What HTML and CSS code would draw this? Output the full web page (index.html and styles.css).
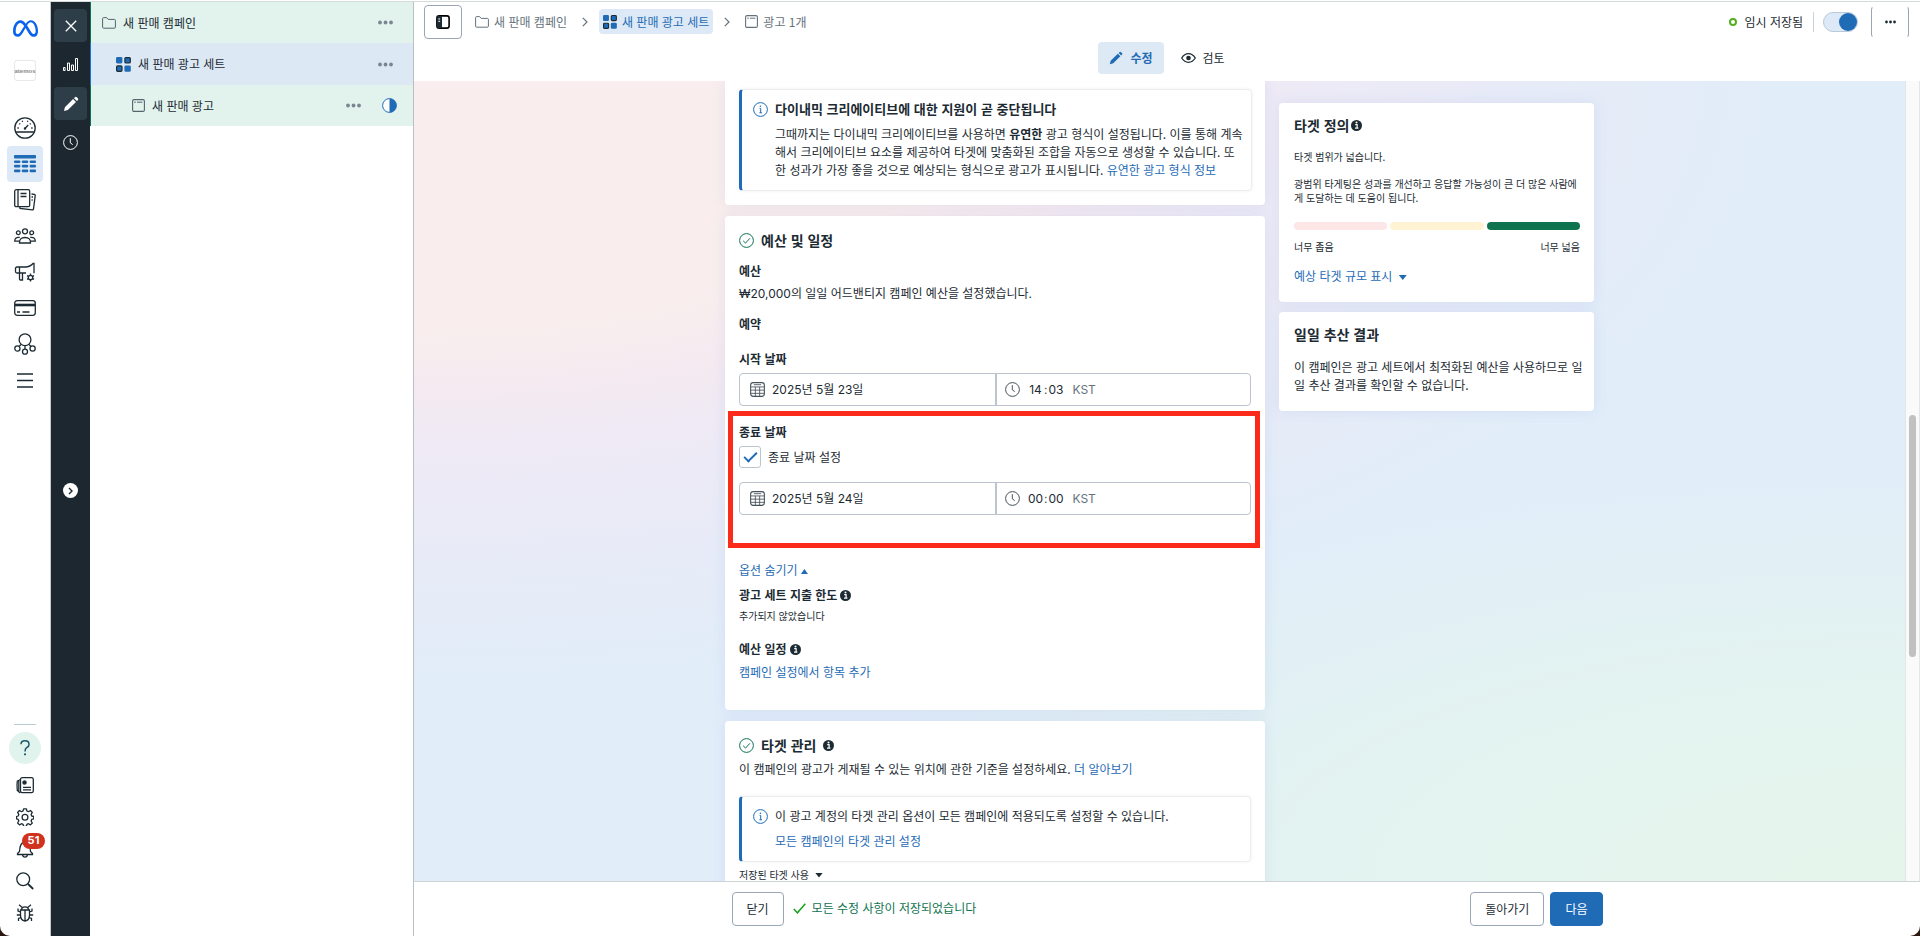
FILE: index.html
```html
<!DOCTYPE html>
<html lang="ko">
<head>
    <meta charset="UTF-8">
    <meta name="viewport" content="width=device-width, initial-scale=1.0">
    <title>광고 관리자</title>
    <link rel="stylesheet" href="styles.css">
</head>
<body>
    <svg class="sprite" aria-hidden="true">
        <symbol id="i-folder" viewBox="0 0 14 14"><path d="M.6 2.6q0-1 1-1h3l1.6 1.8h6.2q1 0 1 1v6.8q0 1-1 1H1.6q-1 0-1-1z" fill="none" stroke="currentColor"/></symbol>
        <symbol id="i-adset" viewBox="0 0 15 15"><rect x="0" y="0" width="6.4" height="6.4" rx="1.4" fill="#1f6bb5"/><rect x="8.9" y=".6" width="5.4" height="5.4" rx="1" fill="#1f6bb5" stroke="#1c2b33" stroke-width="1.2"/><rect x=".6" y="8.9" width="5.4" height="5.4" rx="1" fill="#1f6bb5" stroke="#1c2b33" stroke-width="1.2"/><rect x="8.4" y="8.4" width="6.4" height="6.4" rx="1.4" fill="#1f6bb5"/></symbol>
        <symbol id="i-ad" viewBox="0 0 13 13"><rect x=".6" y=".6" width="11.8" height="11.8" rx="1.4" fill="none" stroke="currentColor" stroke-width="1.1"/><path d="M2.2 3.2h1.6M5 3.2h5.4" stroke="currentColor"/></symbol>
        <symbol id="i-dots" viewBox="0 0 15 5"><circle cx="2" cy="2.5" r="1.9"/><circle cx="7.5" cy="2.5" r="1.9"/><circle cx="13" cy="2.5" r="1.9"/></symbol>
        <symbol id="i-pencil" viewBox="0 0 16 16"><path d="M1 15l.9-3.8 8.2-8.2 2.9 2.9-8.2 8.2zM11 2.2l.9-.9q1-.9 1.9 0l1 1q.9.9 0 1.9l-.9.9z"/></symbol>
        <symbol id="i-clock" viewBox="0 0 15 15"><circle cx="7.5" cy="7.5" r="6.9" fill="none" stroke="currentColor"/><path d="M7.3 3.2v4.6l2.4 1.8" fill="none" stroke="currentColor"/></symbol>
        <symbol id="i-info" viewBox="0 0 11 11"><circle cx="5.5" cy="5.5" r="5.5"/><path d="M4.2 4.6h1.9v3.2M4 8.1h3.4" stroke="#fff" stroke-width="1.2" fill="none"/><circle cx="5.5" cy="2.6" r="1" fill="#fff"/></symbol>
        <symbol id="i-info-o" viewBox="0 0 15 15"><circle cx="7.5" cy="7.5" r="6.9" fill="none" stroke="#1f6bb5"/><path d="M6.6 6.4h1.1v4.4M6.4 10.8h2.6" stroke="#1f6bb5" fill="none"/><circle cx="7.4" cy="4.2" r=".8" fill="#1f6bb5"/></symbol>
        <symbol id="i-ok" viewBox="0 0 15 15"><circle cx="7.5" cy="7.5" r="6.9" fill="none" stroke="#0f7350"/><path d="M4.2 7.8l2.3 2.3 4.4-4.8" fill="none" stroke="#0f7350"/></symbol>
        <symbol id="i-cal" viewBox="0 0 14 14"><path d="M3 .6h8Q13.4.6 13.4 3v8q0 2.400-2.400 2.400H3Q.6 13.400.6 11V3Q.6.6 3 .6z" fill="none" stroke="currentColor"/><path d="M.5 4.6h13M.5 7.6h13M.5 10.6h13M5 4.6v9M9 4.6v9M3.6 2.5h6.8" stroke="currentColor" stroke-width=".8"/></symbol>
        <symbol id="i-chev" viewBox="0 0 6 10"><path d="M.8.8L5 5 .8 9.2" fill="none" stroke="currentColor" stroke-width="1.2"/></symbol>
    </svg>

    <div class="app">
        <nav class="rail" aria-label="비즈니스 도구">
            <a href="#" class="brand" aria-label="Meta"><svg viewBox="0 4 24 16" width="25" height="17"><path fill="#0a63ee" d="M6.915 4.03c-1.968 0-3.683 1.28-4.871 3.113C.704 9.208 0 11.883 0 14.449c0 .706.07 1.369.21 1.973a6.624 6.624 0 0 0 .265.86 5.297 5.297 0 0 0 .371.761c.696 1.159 1.818 1.927 3.593 1.927 1.497 0 2.633-.671 3.965-2.444.76-1.012 1.144-1.626 2.663-4.32l.756-1.339.186-.325c.061.1.121.196.183.3l2.152 3.595c.724 1.21 1.665 2.556 2.47 3.314 1.046.987 1.992 1.22 3.06 1.22 1.075 0 1.876-.355 2.455-.843a3.743 3.743 0 0 0 .81-.973c.542-.939.861-2.127.861-3.745 0-2.72-.681-5.357-2.084-7.45-1.282-1.912-2.957-2.93-4.716-2.93-1.047 0-2.088.467-3.053 1.308-.652.57-1.257 1.29-1.82 2.05-.69-.875-1.335-1.547-1.958-2.056-1.182-.966-2.315-1.303-3.454-1.303zm10.16 2.053c1.147 0 2.188.758 2.992 1.999 1.132 1.748 1.647 4.195 1.647 6.4 0 1.548-.368 2.9-1.839 2.9-.58 0-1.027-.23-1.664-1.004-.496-.601-1.343-1.878-2.832-4.358l-.617-1.028a44.908 44.908 0 0 0-1.255-1.98c.07-.109.141-.224.211-.327 1.12-1.667 2.118-2.602 3.358-2.602zm-10.201.553c1.265 0 2.058.791 2.675 1.446.307.327.737.871 1.234 1.579l-1.02 1.566c-.757 1.163-1.882 3.017-2.837 4.338-1.191 1.649-1.81 1.817-2.486 1.817-.524 0-1.038-.237-1.383-.794-.263-.426-.464-1.13-.464-2.046 0-2.221.63-4.535 1.66-6.088.454-.687.964-1.226 1.533-1.533a2.264 2.264 0 0 1 1.088-.285z"/></svg></a>
            <a href="#" class="account">atemos</a>
            <div class="rail-list">
                <a href="#" class="rail-item" aria-label="계정 개요"><svg viewBox="0 0 22 22" width="22" height="22"><circle cx="11" cy="11" r="10.2"/><path d="M1.5 15h19M11 11.5l3.2-3.5M3.4 11h1.4M5.3 6.5l.9.8M8.2 3.8l.4 1.1M13.8 3.8l-.4 1.1M17.200 11h1.400M16.7 6.5l-.9.8"/><circle cx="11" cy="11.5" r=".6"/></svg></a>
                <a href="#" class="rail-item active" aria-label="캠페인"><svg viewBox="0 0 22 18" width="22" height="18"><g fill="#1f6bb5" stroke="none"><rect width="22" height="3.4" rx="1"/><rect y="5.4" width="6.4" height="2.6" rx="1"/><rect x="7.8" y="5.4" width="6.4" height="2.6" rx="1"/><rect x="15.6" y="5.4" width="6.4" height="2.6" rx="1"/><rect y="9.8" width="6.4" height="2.8" rx="1"/><rect x="7.8" y="9.8" width="6.4" height="2.8" rx="1"/><rect x="15.6" y="9.8" width="6.4" height="2.8" rx="1"/><rect y="14.4" width="6.4" height="2.8" rx="1"/><rect x="7.8" y="14.4" width="6.4" height="2.8" rx="1"/><rect x="15.6" y="14.4" width="6.4" height="2.8" rx="1"/></g></svg></a>
                <a href="#" class="rail-item" aria-label="광고 보고서"><svg viewBox="0 0 22 22" width="22" height="22"><rect x=".7" y=".7" width="15" height="17" rx="1.5"/><path d="M4 .7v17M6.5 4.5h6M6.5 7.5h6M17.5 5l2.8.4q1 .2.9 1.2l-1.7 13.4q-.2 1-1.2.9L6 19.4l-.2-1.6M17.5 8h1.5M17.5 11h1.2"/></svg></a>
                <a href="#" class="rail-item" aria-label="타겟"><svg viewBox="0 0 22 16" width="22" height="16"><circle cx="11" cy="3.3" r="2.5"/><circle cx="4.3" cy="4.7" r="1.9"/><circle cx="17.7" cy="4.7" r="1.9"/><path d="M5.5 15q-.3-5.5 5.5-5.5t5.5 5.5zM5.800 9.4q-5-.8-5.1 3.8h4.6M16.2 9.4q5-.8 5.1 3.8h-4.6"/></svg></a>
                <a href="#" class="rail-item" aria-label="광고 설정"><svg viewBox="0 0 22 20" width="22" height="20"><path d="M1.5 6.5q0-1.5 1.5-1.5h8.5q4.5 0 7.8-3.7h.7v10M1.5 6.5v3q0 1.5 1.5 1.5h9M5.5 5v6M5.5 11v6q0 1 1 1h2v-7"/><circle cx="16.5" cy="15.5" r="2.2"/><path d="M16.5 11.6v1.6M16.5 17.8v1.6M13 13.6l1.4.8M18.6 16.6l1.4.8M13 17.4l1.4-.8M18.6 14.4l1.4-.8"/></svg></a>
                <a href="#" class="rail-item" aria-label="청구"><svg viewBox="0 0 22 16" width="22" height="16"><rect x=".7" y=".7" width="20.6" height="14.6" rx="2.5"/><path d="M3 12h3M8.5 12h7"/><path d="M1 5h20" stroke-width="2.6"/></svg></a>
                <a href="#" class="rail-item" aria-label="이벤트 관리자"><svg viewBox="0 0 22 22" width="22" height="22"><circle cx="11" cy="6.7" r="5.9"/><circle cx="3.4" cy="15.5" r="2.6"/><circle cx="18.6" cy="15.5" r="2.6"/><circle cx="11" cy="18.7" r="2.5"/><path d="M7 11.5l-2 2M15 11.5l2 2M11 12.6v3.5"/></svg></a>
                <a href="#" class="rail-item" aria-label="모든 도구"><svg viewBox="0 0 16 15" width="16" height="15"><path d="M0 1h16M0 7.5h16M0 14h16"/></svg></a>
            </div>
            <div class="rail-list rail-bottom">
                <a href="#" class="help" aria-label="도움말"><svg viewBox="0 0 10 16" width="10" height="16"><path d="M1 4.2Q1 .8 5 .8t4 3.6q0 1.9-2 3Q5 8.6 5 11.4" fill="none" stroke="#1a5a68" stroke-width="1.5"/><circle cx="5" cy="14.3" r="1.1" fill="#1a5a68"/></svg></a>
                <a href="#" class="rail-tool" aria-label="소식"><svg viewBox="0 0 18 17" width="18" height="17"><rect x="4.5" y=".7" width="12.8" height="15" rx="1.8"/><path d="M4.5 2.5L1.3 4.2Q.7 8 1.3 13.5l3 2.5M2.8 4v10.5M7 10.3h8M7 12.8h8"/><circle cx="8.5" cy="5.5" r="1.6" fill="#1c2b33"/></svg></a>
                <a href="#" class="rail-tool" aria-label="설정"><svg viewBox="0 0 18 18" width="18" height="18"><path d="M7.6.8h2.800l.5 2.200 1.500.7 2-1.200 1.900 2-1.200 1.900.6 1.600 2.100.5v2.300l-2.100.6-.6 1.600 1.200 2-1.900 1.900-2-1.200-1.500.6-.5 2.100H7.600L7 16.300l-1.500-.6-2 1.200-1.900-1.900 1.200-2-.6-1.600-1.700-.6V8.500L2.200 8l.6-1.600-1.200-1.900 1.900-2 2 1.200L7 3z" stroke-linejoin="round"/><circle cx="9" cy="9.2" r="2.9"/></svg></a>
                <a href="#" class="rail-tool" aria-label="알림"><svg viewBox="0 0 18 18" width="18" height="18"><path d="M3.5 11.5Q4 2 9 2t5.5 9.5l2 2v1H1.500v-1zM6.5 14.5q.3 2.600 2.500 2.600t2.500-2.600"/></svg><span class="badge">51</span></a>
                <a href="#" class="rail-tool" aria-label="검색"><svg viewBox="0 0 18 18" width="18" height="18"><circle cx="7.2" cy="7.2" r="6.4"/><path d="M12 12l5.2 5" stroke-width="1.8"/></svg></a>
                <a href="#" class="rail-tool" aria-label="문제 신고"><svg viewBox="0 0 18 18" width="18" height="18"><path d="M4.5 6h9v5q0 5.500-4.500 6-4.500-.5-4.500-6zM5.500 6q0-3.200 3.500-3.200T12.500 6M9 6v11M3 .8l3 2.400M15 .8l-3 2.400M4.500 8L2 7V4.500M4.500 11H.8M5 13.500l-2.500 1v2.500M13.500 8L16 7V4.500M13.500 11h3.700M13 13.500l2.500 1v2.500"/></svg></a>
            </div>
        </nav>

        <div class="side">
            <button class="side-btn on" aria-label="닫기"><svg viewBox="0 0 12 12" width="12" height="12"><path d="M.8.8l10.4 10.4M11.2.8L.8 11.2" stroke="#fff" stroke-width="1.3"/></svg></button>
            <button class="side-btn" aria-label="차트"><svg viewBox="0 0 15 13" width="15" height="13"><path d="M.5 9.5h1.600v3H.5zM4.5 5h2v7.5h-2zM8.5 7h2v5.5h-2zM12.5.5h2v12h-2z" fill="none" stroke="#fff"/></svg></button>
            <button class="side-btn on" aria-label="수정"><svg width="16" height="16"><use href="#i-pencil"/></svg></button>
            <button class="side-btn" aria-label="기록"><svg width="15" height="15"><use href="#i-clock"/></svg></button>
            <button class="side-expand" aria-label="펼치기"><svg viewBox="0 0 5 8" width="5" height="8"><path d="M1 1l3 3-3 3" fill="none" stroke="#1c2730" stroke-width="1.4"/></svg></button>
        </div>

        <aside class="tree">
            <div class="tree-row">
                <svg class="muted" width="14" height="14"><use href="#i-folder"/></svg>
                <a href="#">새 판매 캠페인</a>
                <button class="more" aria-label="더 보기"><svg width="15" height="5"><use href="#i-dots"/></svg></button>
            </div>
            <div class="tree-row level2">
                <svg width="15" height="15"><use href="#i-adset"/></svg>
                <a href="#">새 판매 광고 세트</a>
                <button class="more" aria-label="더 보기"><svg width="15" height="5"><use href="#i-dots"/></svg></button>
            </div>
            <div class="tree-row level3">
                <svg class="muted" width="13" height="13"><use href="#i-ad"/></svg>
                <a href="#">새 판매 광고</a>
                <button class="more" aria-label="더 보기"><svg width="15" height="5"><use href="#i-dots"/></svg></button>
                <svg viewBox="0 0 15 15" width="15" height="15"><circle cx="7.5" cy="7.5" r="6.9" fill="#fff" stroke="#1f6bb5"/><path d="M7.5.6a6.9 6.9 0 0 1 0 13.8z" fill="#1f6bb5"/></svg>
            </div>
        </aside>

        <div class="main">
            <header class="header">
                <div class="topline">
                    <button class="panel-btn" aria-label="패널 전환"><svg viewBox="0 0 14 14" width="14" height="14"><rect x=".9" y=".9" width="12.2" height="12.2" rx="2.2" fill="#fff" stroke="#000" stroke-width="1.6"/><path d="M1 2.5Q1 1 2.5 1H6v12H2.5Q1 13 1 11.5z"/><path d="M2.3 4h1.8M2.3 6.3h1.8" stroke="#fff"/></svg></button>
                    <nav class="crumbs" aria-label="경로">
                        <a href="#"><svg width="14" height="14"><use href="#i-folder"/></svg>새 판매 캠페인</a>
                        <svg width="6" height="10"><use href="#i-chev"/></svg>
                        <a href="#" class="current"><svg width="14" height="14"><use href="#i-adset"/></svg>새 판매 광고 세트</a>
                        <svg width="6" height="10"><use href="#i-chev"/></svg>
                        <a href="#"><svg width="13" height="13"><use href="#i-ad"/></svg>광고 1개</a>
                    </nav>
                    <div class="status">
                        <span class="dot"></span><span>임시 저장됨</span>
                        <label class="toggle"><input type="checkbox" checked aria-label="게재"></label>
                        <button class="panel-btn menu-btn" aria-label="더 보기"><svg width="11" height="4"><use href="#i-dots"/></svg></button>
                    </div>
                </div>
                <div class="tabs">
                    <button class="tab on"><svg width="14" height="14"><use href="#i-pencil"/></svg>수정</button>
                    <button class="tab"><svg viewBox="0 0 15 10" width="15" height="10"><path d="M.7 5Q3.5.7 7.5.7T14.3 5Q11.5 9.3 7.5 9.3T.7 5z" fill="none" stroke="currentColor" stroke-width="1.3"/><circle cx="7.5" cy="5" r="2.3"/></svg>검토</button>
                </div>
            </header>

            <div class="scroller">
                <div class="canvas">
                    <div class="column">
                        <section class="card first">
                            <div class="notice">
                                <svg width="15" height="15"><use href="#i-info-o"/></svg>
                                <div>
                                    <h3>다이내믹 크리에이티브에 대한 지원이 곧 중단됩니다</h3>
                                    <p>그때까지는 다이내믹 크리에이티브를 사용하면 <b>유연한</b> 광고 형식이 설정됩니다. 이를 통해 계속<br>해서 크리에이티브 요소를 제공하여 타겟에 맞춤화된 조합을 자동으로 생성할 수 있습니다. 또<br>한 성과가 가장 좋을 것으로 예상되는 형식으로 광고가 표시됩니다. <a href="#">유연한 광고 형식 정보</a></p>
                                </div>
                            </div>
                        </section>

                        <section class="card budget">
                            <h2><svg width="15" height="15"><use href="#i-ok"/></svg>예산 및 일정</h2>
                            <h4 class="gap-md">예산</h4>
                            <p class="gap-xs latin">₩20,000의 일일 어드밴티지 캠페인 예산을 설정했습니다.</p>
                            <h4 class="gap-md">예약</h4>
                            <h4 class="gap-lg">시작 날짜</h4>
                            <div class="datetime gap-xs">
                                <label class="field"><svg width="15" height="15"><use href="#i-cal"/></svg><input type="text" value="2025년 5월 23일" aria-label="시작 날짜"></label>
                                <div class="field"><svg width="15" height="15"><use href="#i-clock"/></svg><input class="num" type="text" value="14" aria-label="시작 시"><span>:</span><input class="num" type="text" value="03" aria-label="시작 분"><span class="zone">KST</span></div>
                            </div>
                            <div class="end-date">
                                <h4>종료 날짜</h4>
                                <label class="check gap-xs"><input type="checkbox" checked>종료 날짜 설정</label>
                                <div class="datetime">
                                    <label class="field"><svg width="15" height="15"><use href="#i-cal"/></svg><input type="text" value="2025년 5월 24일" aria-label="종료 날짜"></label>
                                    <div class="field"><svg width="15" height="15"><use href="#i-clock"/></svg><input class="num" type="text" value="00" aria-label="종료 시"><span>:</span><input class="num" type="text" value="00" aria-label="종료 분"><span class="zone">KST</span></div>
                                </div>
                                <span class="marker"></span>
                            </div>
                            <a href="#" class="options">옵션 숨기기 <span class="caret up"></span></a>
                            <h4>광고 세트 지출 한도 <svg width="11" height="11"><use href="#i-info"/></svg></h4>
                            <p class="small gap-xs">추가되지 않았습니다</p>
                            <h4 class="gap-lg">예산 일정 <svg width="11" height="11"><use href="#i-info"/></svg></h4>
                            <p class="gap-xs"><a href="#">캠페인 설정에서 항목 추가</a></p>
                        </section>

                        <section class="card">
                            <h2><svg width="15" height="15"><use href="#i-ok"/></svg>타겟 관리<svg width="11" height="11"><use href="#i-info"/></svg></h2>
                            <p class="gap-xs">이 캠페인의 광고가 게재될 수 있는 위치에 관한 기준을 설정하세요. <a href="#">더 알아보기</a></p>
                            <div class="notice plain">
                                <svg width="15" height="15"><use href="#i-info-o"/></svg>
                                <div>
                                    <p>이 광고 계정의 타겟 관리 옵션이 모든 캠페인에 적용되도록 설정할 수 있습니다.</p>
                                    <p><a href="#">모든 캠페인의 타겟 관리 설정</a></p>
                                </div>
                            </div>
                            <button class="saved small">저장된 타겟 사용 <span class="caret"></span></button>
                        </section>
                    </div>

                    <aside class="insights">
                        <section class="card">
                            <h2>타겟 정의 <svg width="11" height="11"><use href="#i-info"/></svg></h2>
                            <p class="small reach">타겟 범위가 넓습니다.</p>
                            <p class="small">광범위 타게팅은 성과를 개선하고 응답할 가능성이 큰 더 많은 사람에게 도달하는 데 도움이 됩니다.</p>
                            <div class="meter"><span class="narrow"></span><span class="medium"></span><span class="broad"></span></div>
                            <div class="meter-labels small"><span>너무 좁음</span><span>너무 넓음</span></div>
                            <a href="#" class="estimate">예상 타겟 규모 표시 <span class="caret"></span></a>
                        </section>
                        <section class="card daily">
                            <h2>일일 추산 결과</h2>
                            <p>이 캠페인은 광고 세트에서 최적화된 예산을 사용하므로 일일 추산 결과를 확인할 수 없습니다.</p>
                        </section>
                    </aside>
                </div>
                <div class="track"><div class="thumb"></div></div>
            </div>

            <footer class="footer">
                <div class="footer-inner">
                    <button class="btn">닫기</button>
                    <span class="saved-msg"><svg viewBox="0 0 13 11" width="13" height="11"><path d="M.8 6l3.6 3.8L12.3.8" fill="none" stroke="#18a01c" stroke-width="1.5"/></svg>모든 수정 사항이 저장되었습니다</span>
                    <button class="btn">돌아가기</button>
                    <button class="btn primary">다음</button>
                </div>
            </footer>
        </div>
    </div>
</body>
</html>
```
FILE: styles.css
```css
* {
    box-sizing: border-box;
}
body {
    margin: 0;
    background: #2a160c;
    font-family: "Noto Sans CJK KR", sans-serif;
    font-size: 12px;
    line-height: 18px;
    color: #1c2b33;
    overflow: hidden;
}
h2, h3, h4, p {
    margin: 0;
}
h2 {
    display: flex;
    align-items: center;
    gap: 7px;
    font-size: 14px;
    line-height: 20px;
    font-weight: 700;
}
h3 {
    font-size: 13px;
    line-height: 18px;
}
h4 {
    display: flex;
    align-items: center;
    gap: 3px;
    font-size: 12px;
}
a {
    color: #1f6bb5;
    text-decoration: none;
}
button, input {
    font: inherit;
    color: inherit;
}
button {
    display: flex;
    align-items: center;
    justify-content: center;
    padding: 0;
    border: 0;
    background: none;
    cursor: pointer;
}
svg {
    flex: none;
    fill: currentColor;
}
.sprite {
    position: absolute;
    width: 0;
    height: 0;
}
.small {
    font-size: 10px;
    line-height: 14px;
}
.latin {
    font-family: Inter, "Noto Sans CJK KR", sans-serif;
}
.gap-xs {
    margin-top: 5px;
}
.gap-md {
    margin-top: 12px;
}
.gap-lg {
    margin-top: 17px;
}

.app {
    display: flex;
    height: 100vh;
    padding-top: 2px;
    background: linear-gradient(#fff 1px, #d5dada 1px, #d5dada 2px, #fff 2px);
    border-radius: 0 0 10px 10px;
    overflow: hidden;
}

/* global navigation */
.rail {
    display: flex;
    flex-direction: column;
    align-items: center;
    width: 51px;
    border-right: 1px solid #c3c8cc;
    padding: 18px 0 7px;
}
.rail svg {
    display: block;
}
.brand {
    height: 18px;
}
.account {
    display: flex;
    align-items: center;
    justify-content: center;
    width: 22px;
    height: 21px;
    margin: 22px 0 29px;
    border: 1px solid #e8e8e8;
    border-radius: 3px;
    font-family: "Liberation Sans", sans-serif;
    font-size: 6px;
    font-weight: 700;
    color: #8a8a8a;
}
.rail-list {
    display: flex;
    flex-direction: column;
    align-items: center;
}
.rail-item, .rail-tool {
    display: flex;
    align-items: center;
    justify-content: center;
    width: 36px;
    height: 36px;
    border-radius: 4px;
}
.rail-item svg, .rail-tool svg {
    fill: none;
    stroke: #1c2b33;
    stroke-width: 1.3;
}
.rail-item.active {
    background: #dde9f6;
}
.rail-bottom {
    margin-top: auto;
}
.rail-bottom::before {
    content: "";
    width: 22px;
    height: 1px;
    margin-bottom: 7px;
    background: #b9cbd2;
}
.help {
    display: flex;
    align-items: center;
    justify-content: center;
    width: 32px;
    height: 32px;
    margin-bottom: 5px;
    border-radius: 50%;
    background: #e1f3ed;
}
.rail-tool {
    position: relative;
    height: 32px;
}
.badge {
    position: absolute;
    left: 15px;
    top: 0;
    width: 23px;
    height: 16px;
    border-radius: 8px;
    background: #d0321e;
    color: #fff;
    font: 700 11px/14px Inter, sans-serif;
    text-align: center;
}

/* dark editor strip */
.side {
    display: flex;
    flex-direction: column;
    align-items: center;
    gap: 6px;
    width: 39px;
    padding-top: 7px;
    background: #1c2730;
    color: #fff;
}
.side-btn {
    width: 33px;
    height: 33px;
    border-radius: 4px;
}
.side-btn.on {
    background: #2e3e48;
}
.side-expand {
    width: 15px;
    height: 15px;
    margin-top: 34vh;
    border-radius: 50%;
    background: #fff;
}

/* campaign tree */
.tree {
    width: 324px;
    border-right: 1px solid #b9bfc4;
}
.tree-row {
    display: flex;
    align-items: center;
    gap: 7px;
    height: 41px;
    padding: 0 20px 0 11px;
    border-left: 1px solid #0f7350;
    background: #e2f3ed;
}
.tree-row a {
    margin-right: auto;
    color: #1c2b33;
}
.tree-row.level2 {
    height: 42px;
    padding-left: 25px;
    background: #dde8f5;
    border-color: #1877d2;
}
.tree-row.level3 {
    padding: 0 16px 0 41px;
}
.level3 .more {
    margin-right: 14px;
}
.muted {
    color: #55636b;
}
.more {
    color: #7b8790;
}

/* editor */
.main {
    display: flex;
    flex: 1;
    flex-direction: column;
    min-width: 0;
}
.header {
    height: 79px;
}
.topline {
    display: flex;
    align-items: center;
    height: 39px;
    padding: 0 11px 0 10px;
}
.panel-btn {
    width: 38px;
    height: 34px;
    border: 1px solid #9aa6b5;
    border-radius: 4px;
}
.crumbs {
    display: flex;
    align-items: center;
    gap: 11px;
    margin-left: 9px;
    color: #65727b;
}
.crumbs a {
    display: flex;
    align-items: center;
    gap: 5px;
    height: 25px;
    padding: 0 4px;
    border-radius: 4px;
    color: #65727b;
}
.crumbs .current {
    background: #dde9f6;
    color: #1f6bb5;
}
.status {
    display: flex;
    align-items: center;
    gap: 7px;
    margin-left: auto;
}
.dot {
    width: 8px;
    height: 8px;
    border: 2px solid #52b01e;
    border-radius: 50%;
}
.toggle {
    display: flex;
    margin: 0 6px 0 3px;
    padding-left: 9px;
    border-left: 1px solid #ccd3d8;
}
.toggle input {
    display: flex;
    justify-content: flex-end;
    appearance: none;
    width: 35px;
    height: 20px;
    margin: 0;
    border: 1px solid #b9c9d8;
    border-radius: 10px;
    background: #dde9f6;
}
.toggle input::before {
    content: "";
    width: 18px;
    height: 18px;
    border-radius: 50%;
    background: #1f6bb5;
}
.menu-btn {
    height: 32px;
    border-color: transparent #9aa6b5;
}
.tabs {
    display: flex;
    justify-content: center;
    gap: 6px;
    padding-top: 1px;
}
.tab {
    gap: 7px;
    height: 32px;
    padding: 0 11px;
    border-radius: 4px;
}
.tab.on {
    background: #dde9f4;
    color: #1f6bb5;
    font-weight: 700;
}
.scroller {
    display: flex;
    flex: 1;
    min-height: 0;
}
.canvas {
    display: flex;
    flex: 1;
    align-items: flex-start;
    justify-content: center;
    gap: 14px;
    overflow: hidden;
    background:
        radial-gradient(ellipse 75% 52% at 100% 100%, #e5f5ec 10%, #e3f3f1 55%, rgba(225, 238, 247, 0) 100%),
        radial-gradient(ellipse 122% 100% at 0 0, #f9eeed 31%, #f5eaf0 38%, #eeeaf6 47%, #e6ebf7 62%, #e1edf9 75%);
}
.track {
    width: 15px;
    border: solid #e3e5e7;
    border-width: 0 1px;
    background: #fafafa;
    padding: 334px 3px 0;
}
.thumb {
    height: 242px;
    border-radius: 4px;
    background: #c1c1c1;
}
.column {
    display: flex;
    flex-direction: column;
    gap: 11px;
    width: 540px;
}
.card {
    padding: 14px 14px 29px;
    border-radius: 4px;
    background: #fff;
    box-shadow: 0 0 14px rgba(120, 140, 220, 0.14);
}
.card.first {
    padding: 8px 13px 14px 14px;
    border-radius: 0 0 4px 4px;
}
.notice {
    display: flex;
    gap: 7px;
    padding: 10px 0 11px 11px;
    border: 1px solid #ebedef;
    border-left: 3px solid #1f6bb5;
    border-radius: 4px;
    box-shadow: 0 0 4px rgba(0, 0, 0, 0.06);
}
.notice > svg {
    margin-top: 2px;
}
.notice h3 {
    margin-bottom: 7px;
}
.notice.plain {
    margin-top: 18px;
}
.plain p + p {
    margin-top: 7px;
}
.datetime {
    display: grid;
    grid-template-columns: 1fr 1fr;
    height: 33px;
    border: 1px solid #bcc5ce;
    border-radius: 4px;
    font-family: Inter, "Noto Sans CJK KR", sans-serif;
}
.field {
    display: flex;
    align-items: center;
    padding: 0 10px;
    color: #45525a;
}
.field + .field {
    border-left: 2px solid #bcc5ce;
    padding: 0 8px;
}
.field input {
    flex: 1;
    min-width: 0;
    margin-left: 7px;
    padding: 0;
    border: 0;
    outline: 0;
    background: none;
    color: #1c2b33;
}
.field .num {
    flex: none;
    width: 17px;
    text-align: center;
}
.field span + .num {
    margin-left: 0;
}
.zone {
    margin-left: 8px;
    color: #65727b;
}
.end-date {
    position: relative;
    margin-top: 17px;
    padding-bottom: 26px;
}
.check {
    display: flex;
    align-items: center;
    gap: 7px;
}
.check input {
    display: grid;
    place-items: center;
    appearance: none;
    width: 22px;
    height: 22px;
    margin: 0;
    border: 1px solid #bcc5ce;
    border-radius: 3px;
}
.check input:checked::before {
    content: "";
    width: 11px;
    height: 5px;
    margin-bottom: 4px;
    border: solid #1f6bb5;
    border-width: 0 0 2px 2px;
    transform: rotate(-45deg);
}
.check + .datetime {
    margin-top: 14px;
}
.marker {
    position: absolute;
    inset: -12px -9px -7px -11px;
    border: 5px solid #fb2a1a;
    pointer-events: none;
}
.options {
    display: block;
    margin: 20px 0 7px;
}
.caret {
    display: inline-block;
    width: 8px;
    height: 5px;
    background: currentColor;
    clip-path: polygon(0 0, 100% 0, 50% 100%);
    vertical-align: 1px;
}
.caret.up {
    clip-path: polygon(0 100%, 100% 100%, 50% 0);
    width: 7px;
}
.saved {
    gap: 6px;
    margin-top: 6px;
}
.insights {
    width: 315px;
    margin-top: 22px;
}
.insights .card {
    padding: 12px 14px 17px 15px;
}
.insights .daily {
    margin-top: 10px;
    padding-right: 9px;
}
.insights h2 {
    gap: 2px;
}
.reach {
    margin: 15px 0 13px;
}
.meter {
    display: grid;
    grid-template-columns: repeat(3, 1fr);
    gap: 3px;
    margin-top: 17px;
}
.meter span {
    height: 8px;
    border-radius: 4px;
}
.narrow {
    background: #fde6e6;
}
.medium {
    background: #fff3d4;
}
.broad {
    background: #0f7350;
}
.meter-labels {
    display: flex;
    justify-content: space-between;
    margin: 10px 0 13px;
}
.estimate {
    display: block;
}
.estimate .caret {
    margin-left: 3px;
}
.daily p {
    margin-top: 14px;
}

.footer {
    display: flex;
    justify-content: center;
    height: 55px;
    border-top: 1px solid #ced3d6;
}
.footer-inner {
    display: flex;
    align-items: flex-start;
    width: 871px;
    padding-top: 10px;
}
.btn {
    height: 34px;
    padding: 0 14px;
    border: 1px solid #9aa6b5;
    border-radius: 4px;
}
.btn.primary {
    margin-left: 6px;
    border-color: #1f6bb5;
    background: #1f6bb5;
    color: #fff;
}
.saved-msg {
    display: flex;
    align-items: center;
    gap: 6px;
    height: 32px;
    margin: 0 auto 0 9px;
    color: #0f7350;
}
```
